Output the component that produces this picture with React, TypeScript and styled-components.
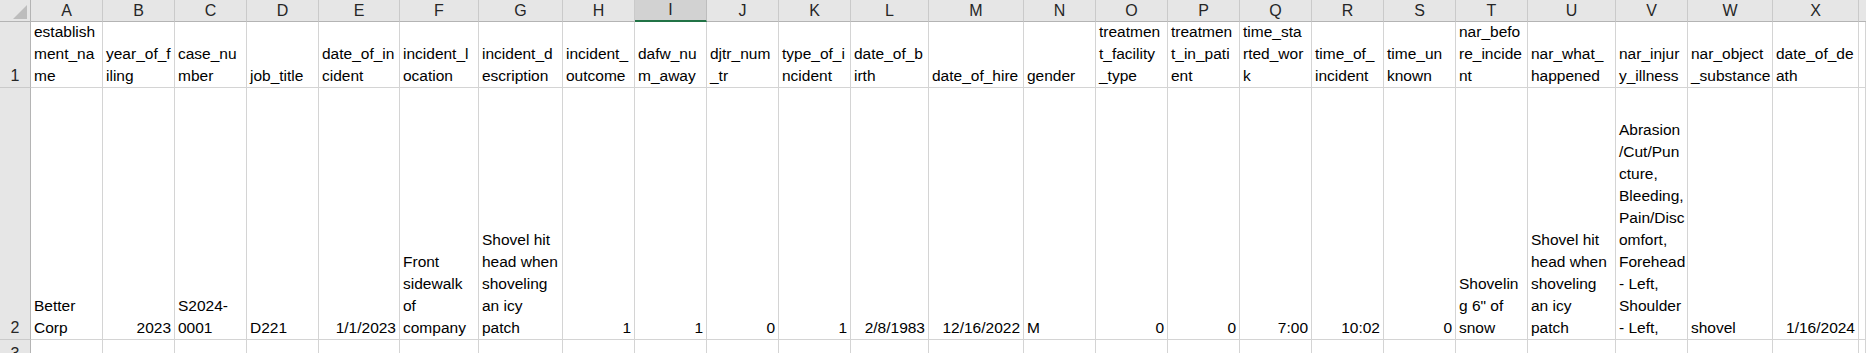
import React from 'react';
import styled, { createGlobalStyle } from 'styled-components';

const GlobalStyle = createGlobalStyle`
  html, body {
    margin: 0;
    padding: 0;
    background: #ffffff;
    overflow: hidden;
  }
  body {
    font-family: "Liberation Sans", Arial, sans-serif;
  }
`;

interface Column {
  letter: string;
  width: number;
  header: string[];
  value: string[];
  numeric?: boolean;
}

const columns: Column[] = [
  { letter: 'A', width: 72, header: ['establish', 'ment_na', 'me'], value: ['Better', 'Corp'] },
  { letter: 'B', width: 72, header: ['year_of_f', 'iling'], value: ['2023'], numeric: true },
  { letter: 'C', width: 72, header: ['case_nu', 'mber'], value: ['S2024-', '0001'] },
  { letter: 'D', width: 72, header: ['job_title'], value: ['D221'] },
  { letter: 'E', width: 81, header: ['date_of_in', 'cident'], value: ['1/1/2023'], numeric: true },
  { letter: 'F', width: 79, header: ['incident_l', 'ocation'], value: ['Front', 'sidewalk', 'of', 'company'] },
  { letter: 'G', width: 84, header: ['incident_d', 'escription'], value: ['Shovel hit', 'head when', 'shoveling', 'an icy', 'patch'] },
  { letter: 'H', width: 72, header: ['incident_', 'outcome'], value: ['1'], numeric: true },
  { letter: 'I', width: 72, header: ['dafw_nu', 'm_away'], value: ['1'], numeric: true },
  { letter: 'J', width: 72, header: ['djtr_num', '_tr'], value: ['0'], numeric: true },
  { letter: 'K', width: 72, header: ['type_of_i', 'ncident'], value: ['1'], numeric: true },
  { letter: 'L', width: 78, header: ['date_of_b', 'irth'], value: ['2/8/1983'], numeric: true },
  { letter: 'M', width: 95, header: ['date_of_hire'], value: ['12/16/2022'], numeric: true },
  { letter: 'N', width: 72, header: ['gender'], value: ['M'] },
  { letter: 'O', width: 72, header: ['treatmen', 't_facility', '_type'], value: ['0'], numeric: true },
  { letter: 'P', width: 72, header: ['treatmen', 't_in_pati', 'ent'], value: ['0'], numeric: true },
  { letter: 'Q', width: 72, header: ['time_sta', 'rted_wor', 'k'], value: ['7:00'], numeric: true },
  { letter: 'R', width: 72, header: ['time_of_', 'incident'], value: ['10:02'], numeric: true },
  { letter: 'S', width: 72, header: ['time_un', 'known'], value: ['0'], numeric: true },
  { letter: 'T', width: 72, header: ['nar_befo', 're_incide', 'nt'], value: ['Shovelin', 'g 6" of', 'snow'] },
  { letter: 'U', width: 88, header: ['nar_what_', 'happened'], value: ['Shovel hit', 'head when', 'shoveling', 'an icy', 'patch'] },
  {
    letter: 'V',
    width: 72,
    header: ['nar_injur', 'y_illness'],
    value: ['Abrasion', '/Cut/Pun', 'cture,', 'Bleeding,', 'Pain/Disc', 'omfort,', 'Forehead', '- Left,', 'Shoulder', '- Left,'],
  },
  { letter: 'W', width: 85, header: ['nar_object', '_substance'], value: ['shovel'] },
  { letter: 'X', width: 86, header: ['date_of_de', 'ath'], value: ['1/16/2024'], numeric: true },
];

const SELECTED = 'I';

const Sheet = styled.div<{ template: string }>`
  display: grid;
  grid-template-columns: ${props => props.template};
  grid-template-rows: 22px 66px 252px 26px;
  height: 100vh;
  overflow: hidden;
  font-size: 15.5px;
  color: #000000;
`;

const Corner = styled.div`
  background: #e6e6e6;
  border-right: 1px solid #b4b4b4;
  border-bottom: 1px solid #b4b4b4;
  box-sizing: border-box;
  display: flex;
  justify-content: flex-end;
  align-items: flex-end;
  padding: 0 3px 2px 0;

  svg {
    display: block;
  }
`;

const ColHeader = styled.div<{ selected?: boolean }>`
  background: ${props => (props.selected ? '#d2d2d2' : '#e6e6e6')};
  border-right: 1px solid ${props => (props.selected ? '#bdbdbd' : '#cacaca')};
  border-bottom: ${props => (props.selected ? '2px solid #217346' : '1px solid #b4b4b4')};
  box-sizing: border-box;
  display: flex;
  align-items: center;
  justify-content: center;
  line-height: 20px;
  font-size: 16px;
  color: #262626;
`;

const EdgeHeader = styled.div`
  background: #e6e6e6;
  border-bottom: 1px solid #b4b4b4;
  box-sizing: border-box;
`;

const RowHeader = styled.div`
  background: #e6e6e6;
  border-right: 1px solid #b4b4b4;
  border-bottom: 1px solid #cacaca;
  box-sizing: border-box;
  display: flex;
  align-items: flex-end;
  justify-content: center;
  line-height: 22px;
  font-size: 16px;
  color: #262626;
`;

const Cell = styled.div<{ numeric?: boolean }>`
  border-right: 1px solid #d4d4d4;
  border-bottom: 1px solid #d4d4d4;
  box-sizing: border-box;
  display: flex;
  flex-direction: column;
  justify-content: flex-end;
  align-items: ${props => (props.numeric ? 'flex-end' : 'flex-start')};
  padding: 0 3px 0 3px;
  overflow: hidden;
  line-height: 22px;
`;

const Line = styled.span`
  white-space: nowrap;
  display: block;
`;

const CornerTriangle: React.FC = () => (
  <svg width="14" height="14" viewBox="0 0 14 14">
    <polygon points="14,0 14,14 0,14" fill="#bdbdbd" />
  </svg>
);

const renderLines = (lines: string[]) =>
  lines.map((text, i) => <Line key={i}>{text}</Line>);

const App: React.FC = () => {
  const template = ['31px', ...columns.map(c => `${c.width}px`), '1fr'].join(' ');

  return (
    <>
      <GlobalStyle />
      <Sheet template={template}>
        <Corner>
          <CornerTriangle />
        </Corner>
        {columns.map(col => (
          <ColHeader key={col.letter} selected={col.letter === SELECTED}>
            {col.letter}
          </ColHeader>
        ))}
        <EdgeHeader />

        <RowHeader>1</RowHeader>
        {columns.map(col => (
          <Cell key={col.letter}>{renderLines(col.header)}</Cell>
        ))}
        <Cell />

        <RowHeader>2</RowHeader>
        {columns.map(col => (
          <Cell key={col.letter} numeric={col.numeric}>
            {renderLines(col.value)}
          </Cell>
        ))}
        <Cell />

        <RowHeader>3</RowHeader>
        {columns.map(col => (
          <Cell key={col.letter} />
        ))}
        <Cell />
      </Sheet>
    </>
  );
};

export default App;
